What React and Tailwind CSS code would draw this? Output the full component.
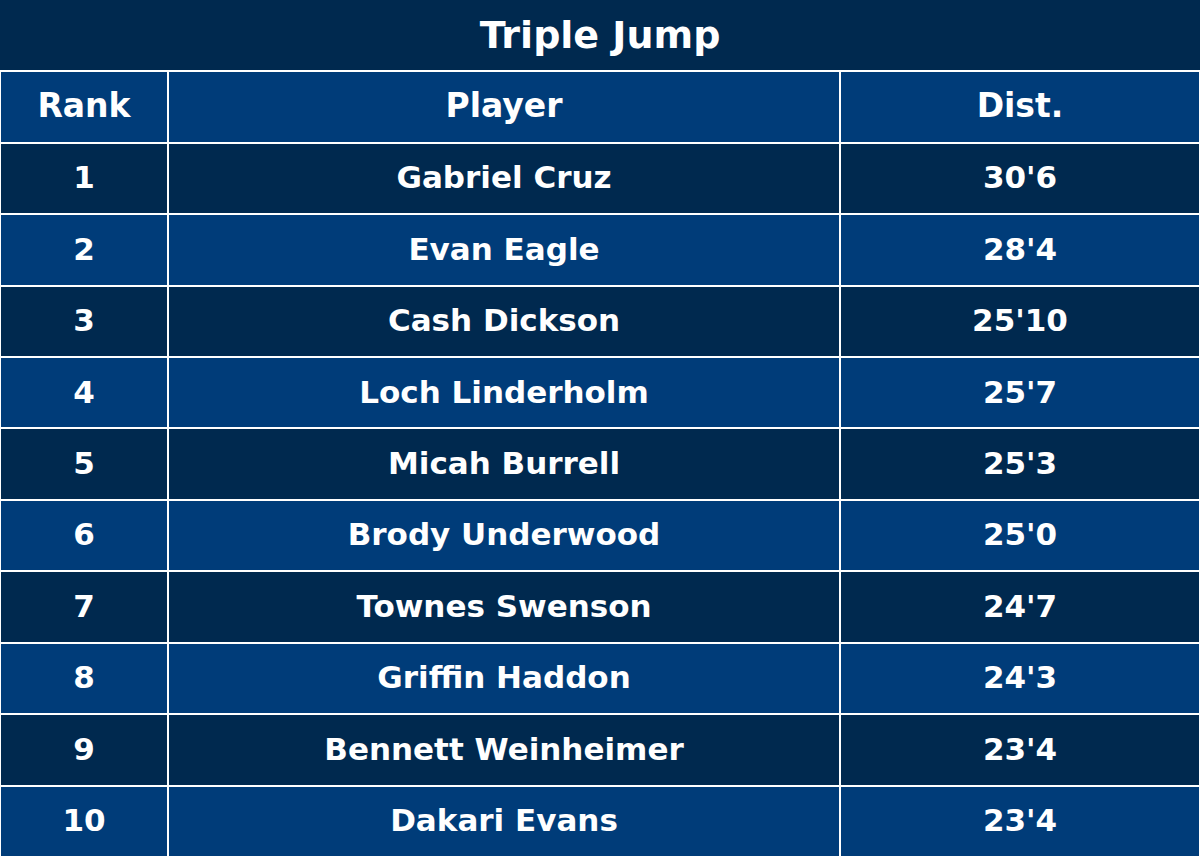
import React from "react";

const rows = [
  ["1", "Gabriel Cruz", "30'6"],
  ["2", "Evan Eagle", "28'4"],
  ["3", "Cash Dickson", "25'10"],
  ["4", "Loch Linderholm", "25'7"],
  ["5", "Micah Burrell", "25'3"],
  ["6", "Brody Underwood", "25'0"],
  ["7", "Townes Swenson", "24'7"],
  ["8", "Griffin Haddon", "24'3"],
  ["9", "Bennett Weinheimer", "23'4"],
  ["10", "Dakari Evans", "23'4"],
];

export default function App() {
  return (
    <div
      className="w-[1200px] h-[857px] bg-white p-px grid grid-cols-[166px_670px_1fr] grid-rows-12 gap-[2px] text-white font-bold"
      style={{ fontFamily: '"DejaVu Sans", sans-serif' }}
    >
      <div className="col-span-3 bg-[#00294f] flex items-center justify-center text-[38px] -m-px mb-0">
        Triple Jump
      </div>
      {["Rank", "Player", "Dist."].map((h) => (
        <div key={h} className="bg-[#003c79] flex items-center justify-center text-[33px] pb-[2px]">
          {h}
        </div>
      ))}
      {rows.map((r, i) =>
        r.map((c, j) => (
          <div
            key={i + "-" + j}
            className={
              "flex items-center justify-center text-[31px] pb-[2px] " +
              (i % 2 === 0 ? "bg-[#00294f]" : "bg-[#003c79]")
            }
          >
            {c}
          </div>
        ))
      )}
    </div>
  );
}
